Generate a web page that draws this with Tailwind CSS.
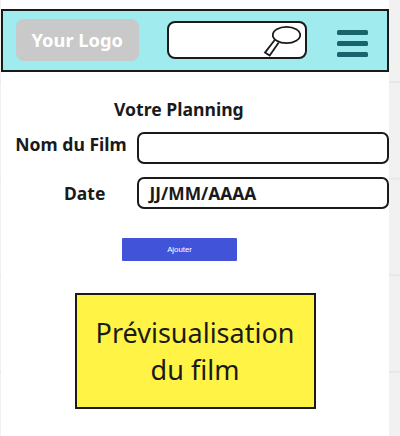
<!DOCTYPE html>
<html lang="fr">
<head>
<meta charset="utf-8">
<title>Votre Planning</title>
<script src="https://cdn.jsdelivr.net/npm/@tailwindcss/browser@4"></script>
</head>
<body class="w-[400px] h-[436px] overflow-hidden bg-[#f1f1f1] text-[#1a1a1a] font-['Noto_Sans','Open_Sans',sans-serif]">
<div class="h-[436px] pl-px bg-[linear-gradient(to_bottom,#e7e7e7_2px,transparent_2px)] bg-[length:100%_96.6px] bg-[position:0_81px]">
  <main class="w-[388px] h-[436px] bg-white pt-[8.5px] flex flex-col">
    <header class="h-[63px] shrink-0 border-2 border-[#1a1a1a] bg-[#a0ebed] flex items-start pl-[12.5px] pt-[8.5px]">
      <div class="w-[123.5px] h-[42px] rounded-[8px] bg-[#c9c9c9] text-white font-bold text-[18.3px] leading-[42px] text-center whitespace-nowrap">Your Logo</div>
      <div class="ml-[28px] mt-[2px] w-[140px] h-[38px] rounded-[8px] border-2 border-[#1a1a1a] bg-white flex justify-end pr-[4.5px] pt-[2px]">
        <svg class="w-[38px] h-[32px] shrink-0" viewBox="263 25 38 32" fill="none" stroke="#1a1a1a" stroke-width="1.8"><ellipse cx="286.5" cy="35" rx="13.7" ry="8.2"/><path d="M274.7 40L265 52.6L269.7 55.6L278.7 42.5"/></svg>
      </div>
      <div class="ml-[30px] mt-[10.5px] w-[31px] flex flex-col gap-[6px]">
        <i class="h-[5px] rounded-[1.5px] bg-[#17646a]"></i><i class="h-[5px] rounded-[1.5px] bg-[#17646a]"></i><i class="h-[5px] rounded-[1.5px] bg-[#17646a]"></i>
      </div>
    </header>
    <h1 class="mt-[25px] ml-[113px] h-[24px] text-[17.6px] leading-[24px] font-bold whitespace-nowrap">Votre Planning</h1>
    <div class="mt-[11.5px] flex shrink-0 h-[32px]">
      <label class="w-[136px] pl-[14.3px] text-[17.6px] leading-[24px] font-bold whitespace-nowrap">Nom du Film</label>
      <div class="w-[252px] border-2 border-[#1a1a1a] rounded-[7px]"></div>
    </div>
    <div class="mt-[13px] flex shrink-0 h-[32px]">
      <label class="w-[136px] pl-[63px] text-[17.5px] leading-[32px] font-bold whitespace-nowrap">Date</label>
      <div class="w-[252px] border-2 border-[#1a1a1a] rounded-[7px] pl-[10.5px] text-[17.4px] leading-[28px] font-bold whitespace-nowrap">JJ/MM/AAAA</div>
    </div>
    <button class="mt-[29px] ml-[121px] shrink-0 w-[115px] h-[23px] rounded-[1px] bg-[#4053d9] text-white text-[7.8px] leading-[23px] text-center font-['Liberation_Sans',sans-serif]">Ajouter</button>
    <section class="mt-[32px] ml-[73.5px] shrink-0 w-[241px] h-[116px] border-2 border-[#1a1a1a] bg-[#fff445] text-center text-[27px] leading-[37.5px] pt-[18.5px] whitespace-nowrap">Prévisualisation<br>du film</section>
  </main>
</div>
</body>
</html>
